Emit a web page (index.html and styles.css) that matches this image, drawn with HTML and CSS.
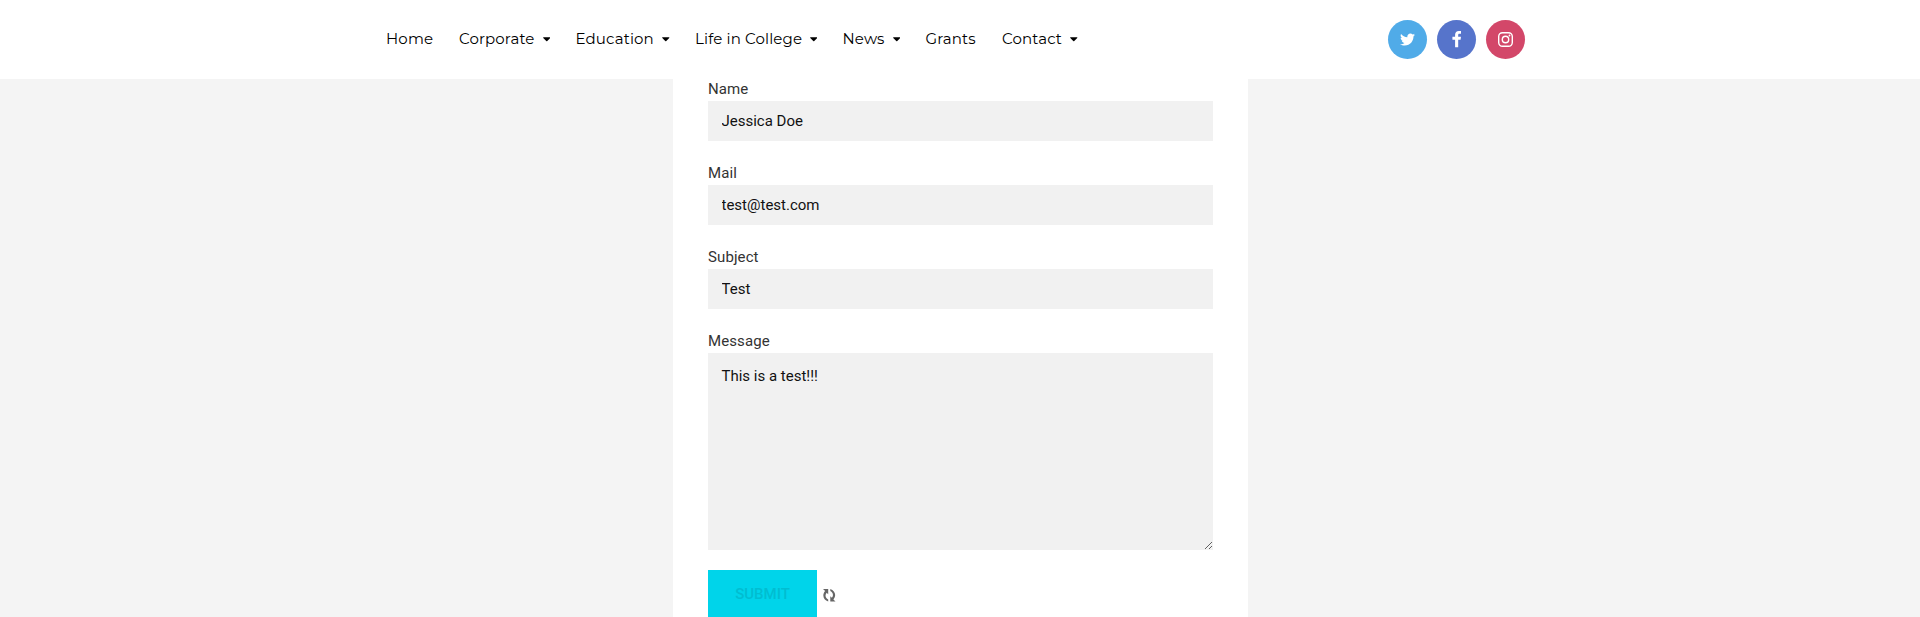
FILE: index.html
```html
<!DOCTYPE html>
<html lang="en">
<head>
<meta charset="utf-8">
<title>Contact</title>
<link rel="stylesheet" href="styles.css">
</head>
<body>
<header class="topbar">
  <nav class="menu">
    <a class="item home">Home</a>
    <a class="item corporate">Corporate<svg class="caret" viewBox="0 0 8 5"><path d="M.6 0h6.800q.9.200.3.900L4.500 4.200q-.5.400-1 0L.3.900Q-.2.200.6 0z"/></svg></a>
    <a class="item education">Education<svg class="caret" viewBox="0 0 8 5"><path d="M.6 0h6.800q.9.200.3.900L4.500 4.200q-.5.400-1 0L.3.900Q-.2.200.6 0z"/></svg></a>
    <a class="item life">Life in College<svg class="caret" viewBox="0 0 8 5"><path d="M.6 0h6.800q.9.200.3.900L4.500 4.200q-.5.400-1 0L.3.900Q-.2.200.6 0z"/></svg></a>
    <a class="item news">News<svg class="caret" viewBox="0 0 8 5"><path d="M.6 0h6.800q.9.200.3.900L4.500 4.200q-.5.400-1 0L.3.900Q-.2.200.6 0z"/></svg></a>
    <a class="item grants">Grants</a>
    <a class="item contact">Contact<svg class="caret" viewBox="0 0 8 5"><path d="M.6 0h6.800q.9.200.3.900L4.500 4.200q-.5.400-1 0L.3.900Q-.2.200.6 0z"/></svg></a>
  </nav>
  <div class="social">
    <a class="circle twitter"><svg viewBox="0 0 512 512" width="15" height="15"><path d="M459.370 151.716c.325 4.548.325 9.097.325 13.645 0 138.720-105.583 298.558-298.558 298.558-59.452 0-114.680-17.219-161.137-47.106 8.447.974 16.568 1.299 25.340 1.299 49.055 0 94.213-16.568 130.274-44.832-46.132-.975-84.792-31.188-98.112-72.772 6.498.974 12.995 1.624 19.818 1.624 9.421 0 18.843-1.300 27.614-3.573-48.081-9.747-84.143-51.980-84.143-102.985v-1.299c13.969 7.797 30.214 12.670 47.431 13.319-28.264-18.843-46.781-51.005-46.781-87.391 0-19.492 5.197-37.360 14.294-52.954 51.655 63.675 129.300 105.258 216.365 109.807-1.624-7.797-2.599-15.918-2.599-24.040 0-57.828 46.782-104.934 104.934-104.934 30.213 0 57.502 12.670 76.670 33.137 23.715-4.548 46.456-13.320 66.599-25.340-7.798 24.366-24.366 44.833-46.132 57.827 21.117-2.273 41.584-8.122 60.426-16.243-14.292 20.791-32.161 39.308-52.628 54.253z"/></svg></a>
    <a class="circle facebook"><svg viewBox="0 0 9 16" width="9.500" height="16.500"><path d="M8.700.1v2.600H7.200C6 2.700 5.900 3.300 5.900 4v1.600h2.700L8.200 8.500H5.900v7.200H2.900V8.500H.3V5.600h2.600V3.700C2.900 1.300 4.300 0 6.500 0c1 0 2 .1 2.200.1z"/></svg></a>
    <a class="circle instagram"><svg viewBox="0 0 15 15" width="15" height="15"><rect class="ring" x=".7" y=".7" width="13.600" height="13.600" rx="3.800"/><circle class="ring" cx="7.500" cy="7.500" r="3.200"/><circle cx="11.500" cy="3.500" r=".9"/></svg></a>
  </div>
</header>
<main class="card">
  <form class="form">
    <div class="field"><label for="name">Name</label><input id="name" type="text" value="Jessica Doe"></div>
    <div class="field"><label for="mail">Mail</label><input id="mail" type="text" value="test@test.com"></div>
    <div class="field"><label for="subject">Subject</label><input id="subject" type="text" value="Test"></div>
    <div class="field message"><label for="message">Message</label><textarea id="message">This is a test!!!</textarea></div>
    <div class="actions">
      <button class="submit" type="button">SUBMIT</button>
      <svg class="sync" viewBox="0 0 12 12"><path d="M0 0h5v5L3.500 3.500C1.600 5.700 2.300 8.700 5 10v2C.6 10.600-1.300 5.800 2 2L0 0zM7 0c4.400 1.400 6.300 6.200 3 10l2 2H7V7l1.500 1.500C10.400 6.300 9.700 3.300 7 2z"/></svg>
    </div>
  </form>
</main>
</body>
</html>
```
FILE: styles.css
```css
* { box-sizing: border-box; }
body {
  margin: 0;
  height: 617px;
  overflow: hidden;
  background: #f4f4f4;
  font-family: Roboto, "Liberation Sans", sans-serif;
}
.topbar {
  display: flex;
  justify-content: space-between;
  align-items: center;
  height: 79px;
  padding: 0 395px 0 386px;
  background: #fff;
}
.menu {
  display: grid;
  grid-template-columns: 73px 116.500px 119.500px 147.500px 83px 76.500px 101.500px;
  padding-bottom: 2px;
  font: 400 15px/20px Montserrat, Inter, sans-serif;
  letter-spacing: .14px;
  color: #000;
}
.item {
  display: flex;
  align-items: center;
  justify-content: space-between;
  padding-right: 25.500px;
  white-space: nowrap;
}
.contact { padding-right: 26px; }
.caret { width: 7.500px; height: 5px; margin-top: 1px; fill: #000; flex: none; }
.social { display: flex; gap: 10px; }
.circle {
  display: flex;
  align-items: center;
  justify-content: center;
  width: 39px;
  height: 39px;
  border-radius: 50%;
}
.circle svg { fill: #fff; }
.twitter { background: #50abe8; }
.facebook { background: #5674cb; }
.instagram { background: #d34769; }
.instagram .ring { fill: none; stroke: #fff; stroke-width: 1.400px; }
.card {
  width: 575px;
  height: 538px;
  margin-left: 673px;
  padding: 0 35px;
  background: #fff;
}
.field { height: 84px; }
.message { height: 241px; }
.field label {
  display: block;
  height: 22px;
  font-size: 15px;
  line-height: 20px;
  letter-spacing: .1px;
  color: #333;
}
.field input,
.field textarea {
  display: block;
  width: 505px;
  height: 40px;
  margin: 0;
  padding: 0 13.500px;
  border: 0;
  border-radius: 0;
  background: #f1f1f1;
  color: #111;
  font: 400 15px/20px Roboto, "Liberation Sans", sans-serif;
}
.field textarea { height: 197px; padding: 13px 13.500px; }
.actions { display: flex; gap: 6px; }
.submit {
  width: 109px;
  height: 49px;
  margin-top: -2px;
  padding: 0 0 2px;
  border: 0;
  background: #00d4ea;
  color: #00bdd1;
  font: 500 15px/20px Roboto, "Liberation Sans", sans-serif;
}
.sync { width: 12.500px; height: 12.500px; margin-top: 17px; fill: #666; }
```
